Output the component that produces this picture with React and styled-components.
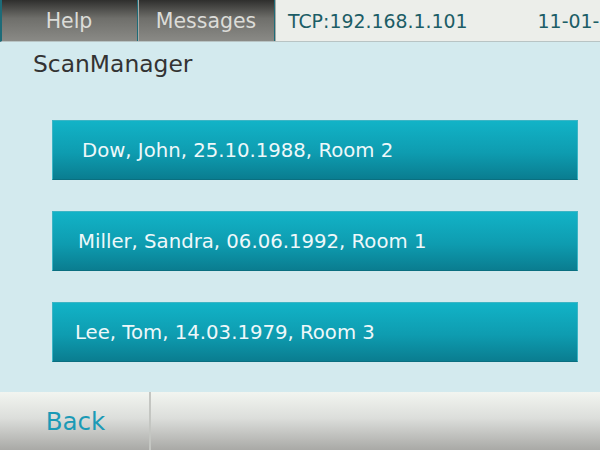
import styled, { createGlobalStyle } from 'styled-components';

const GlobalStyle = createGlobalStyle`
  html, body { margin: 0; padding: 0; }
  body {
    width: 600px;
    height: 450px;
    overflow: hidden;
    font-family: "DejaVu Sans", Verdana, sans-serif;
    background: #d3eaee;
  }
`;

const Screen = styled.div`
  width: 600px;
  height: 450px;
  display: flex;
  flex-direction: column;
  background: #d3eaee;
`;

const TopBar = styled.div`
  display: flex;
  height: 41px;
  border-left: 2px solid #1d6b78;
  border-bottom: 1px solid #b8c4c4;
`;

const Tab = styled.div`
  width: 134px;
  display: flex;
  align-items: center;
  justify-content: center;
  font-size: 20.5px;
  color: #dcdcd8;
  background: linear-gradient(#2f2f2d 0%, #6f6f6b 45%, #8a8a86 100%);
  border-right: 1px solid #a7aaa6;
  box-shadow: inset -1px 0 0 #1d6b78;
  padding-right: 2px;
`;

const Status = styled.div`
  flex: 1;
  display: flex;
  align-items: center;
  gap: 70px;
  padding-left: 12px;
  white-space: nowrap;
  overflow: hidden;
  background: #eceeea;
  color: #1c5d66;
  font-size: 18.9px;
`;

const Title = styled.div`
  box-sizing: border-box;
  height: 38px;
  padding: 9px 0 0 33px;
  font-size: 23.4px;
  line-height: 27px;
  color: #333;
`;

const List = styled.div`
  flex: 1;
  display: flex;
  flex-direction: column;
  gap: 31px;
  padding: 40px 0 0 52px;
`;

const PatientButton = styled.div`
  width: 526px;
  height: 60px;
  box-sizing: border-box;
  display: flex;
  align-items: center;
  padding-left: ${(p) => p.indent}px;
  font-size: 19.7px;
  color: #eef8fa;
  background: linear-gradient(#12b3c7 0%, #0e9cb0 55%, #0a7d90 100%);
  border: 1px solid #3cb5c5;
  border-bottom-color: #0a6f80;
`;

const BottomBar = styled.div`
  height: 58px;
  display: flex;
  background: linear-gradient(#f2f5f0 0%, #dcdedb 45%, #a9a9a6 100%);
`;

const BackButton = styled.div`
  width: 151px;
  display: flex;
  align-items: center;
  justify-content: center;
  font-size: 24.5px;
  color: #1b9ab6;
  padding-left: 2px;
  padding-top: 1px;
  border-right: 2px solid #c4c6c2;
  box-sizing: border-box;
`;

const patients = [
  { label: 'Dow, John, 25.10.1988, Room 2', indent: 29 },
  { label: 'Miller, Sandra, 06.06.1992, Room 1', indent: 25 },
  { label: 'Lee, Tom, 14.03.1979, Room 3', indent: 22 },
];

export default function App() {
  return (
    <>
      <GlobalStyle />
      <Screen>
        <TopBar>
          <Tab>Help</Tab>
          <Tab>Messages</Tab>
          <Status>
            <span>TCP:192.168.1.101</span>
            <span>11-01-2018 10:45</span>
          </Status>
        </TopBar>
        <Title>ScanManager</Title>
        <List>
          {patients.map((p) => (
            <PatientButton key={p.label} indent={p.indent}>
              {p.label}
            </PatientButton>
          ))}
        </List>
        <BottomBar>
          <BackButton>Back</BackButton>
        </BottomBar>
      </Screen>
    </>
  );
}
